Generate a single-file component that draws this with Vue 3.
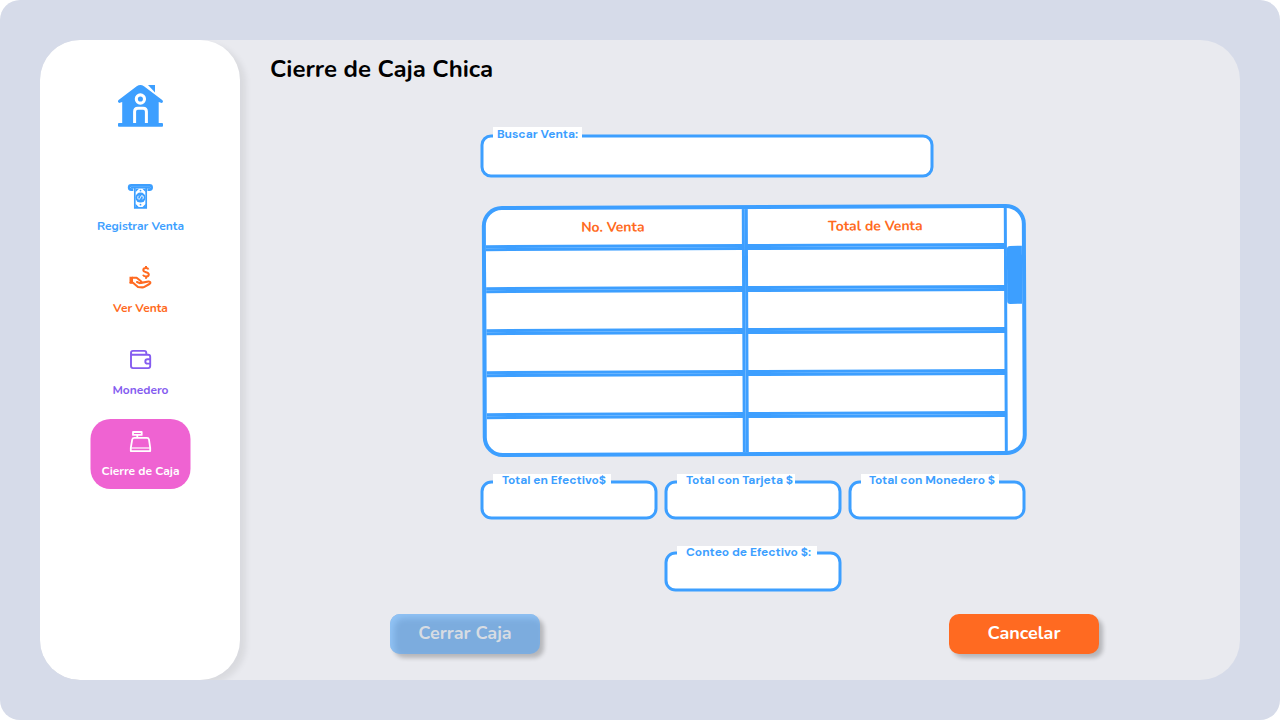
<script setup>
const nav = [
  { id: 'register', label: 'Registrar Venta' },
  { id: 'view', label: 'Ver Venta' },
  { id: 'wallet', label: 'Monedero' },
  { id: 'close', label: 'Cierre de Caja' },
]
const totals = [
  { id: 'cash', label: 'Total en Efectivo$' },
  { id: 'card', label: 'Total con Tarjeta $' },
  { id: 'purse', label: 'Total con Monedero $' },
]
const rows = [1, 2, 3, 4, 5]
</script>

<template>
  <div class="frame">
    <div class="panel">
      <aside class="sidebar">
        <svg class="home" width="45" height="42" viewBox="0 0 45 42">
          <path fill="#3d9fff" d="M18.7 1.2Q22.4-1.1 26 1.2L44.2 15q1.1 1.100.6 2.200l-1.100.9-3-1.200v21h3.400q.9 0 .9 1v1.800q0 1-.9 1H.9q-.9 0-.9-1v-1.800q0-1 .9-1h3.300v-21l-3 1.200L.1 17q-.4-1.300.5-2z" />
          <path fill="#3d9fff" d="M30 .1h7v7.500z" />
          <circle cx="22.400" cy="14" r="4.100" fill="#3d9fff" stroke="#fff" stroke-width="3.100" />
          <path d="M16.600 37.900V26.400q0-3.200 3.200-3.200h5.400q3.200 0 3.200 3.200v11.500" fill="none" stroke="#fff" stroke-width="3" />
        </svg>
        <nav>
          <div v-for="n in nav" :key="n.id" class="item" :class="n.id">
            <svg v-if="n.id === 'register'" width="28" height="28" viewBox="0 0 28 28">
              <path d="M6.800 6.600H4.700a2.100 2.100 0 0 1 0-4.200h18.400a2.100 2.100 0 0 1 0 4.200H21" fill="none" stroke="currentColor" stroke-width="2.600" />
              <path d="M5 4.500h18" stroke="currentColor" stroke-width="1.900" stroke-linecap="round" />
              <path d="M8.300 4.800v20h11.400v-20" fill="none" stroke="currentColor" stroke-width="1.700" />
              <circle cx="14" cy="14.600" r="5" fill="currentColor" />
              <path d="M9 5.800h3.500L9 9.300zM19.300 5.800h-3.500l3.500 3.500zM9 24.300h3.500L9 20.800zM19.300 24.300h-3.500l3.500-3.500z" fill="currentColor" />
              <circle cx="14" cy="7.600" r=".9" fill="currentColor" /><circle cx="14" cy="21.700" r=".9" fill="currentColor" />
              <path d="M12.300 12.700c-1.700 1-1.100 3.800.4 3.500 1.700-.4 1-3.400 2.700-3.600 1.500-.1 2 2.700.5 3.700" fill="none" stroke="#fff" stroke-width="1" />
            </svg>
            <svg v-else-if="n.id === 'view'" width="28" height="28" viewBox="0 0 28 28">
              <path d="M22 5.500c-.4-1-1.300-1.400-2.500-1.400-1.700 0-2.700.8-2.700 2 0 3 5.500 1.300 5.500 4.400 0 1.300-1.100 2.100-2.800 2.100-1.500 0-2.600-.6-3-1.800M19.500 2.100v2M19.500 12.600v2.100" fill="none" stroke="currentColor" stroke-width="2" />
              <path d="M3 12.800h3.500v6.400H3z" fill="currentColor" />
              <path d="M6 13.700h4.100l4.100 3.300c1.200 1.100.5 2.200-1 2.100L10.500 18M14.600 18.900l7.400-1.400c2-.2 2.600 1.500.9 2.500l-5 2.900q-1 .6-2.200.5l-4.200-.4-5-4.200H4" fill="none" stroke="currentColor" stroke-width="2.100" stroke-linejoin="round" stroke-linecap="round" />
            </svg>
            <svg v-else-if="n.id === 'wallet'" width="28" height="28" viewBox="0 0 28 28">
              <g fill="none" stroke="currentColor" stroke-width="1.900" transform="translate(-.4 0)">
                <path d="M4.900 8.300V6.900q0-2 2-2h11.200q2.100 0 2.100 2.100v1.400M4.900 7.500v12.600q0 2 2 2h15.200q2 0 2-2V10.700q0-2-2-2H6.300q-1.400 0-1.400-1.400" />
                <path d="M24 13.200h-2.600a2.200 2.200 0 0 0 0 4.400H24" />
              </g>
            </svg>
            <svg v-else width="28" height="28" viewBox="0 0 28 28">
              <g fill="none" stroke="currentColor" stroke-width="1.800" stroke-linejoin="round" transform="translate(-.5 0)">
                <path d="M7 4h8.700v2.900H7zM11.300 7v3M8.900 9.900h12.100q1.700 0 2 1.700l1.200 8.300v3.200H4.800v-3.200l1.400-8.300q.4-1.700 2-1.700z" />
                <path d="M5.200 19.900h19" stroke-width="1.500" opacity=".8" />
              </g>
            </svg>
            <span>{{ n.label }}</span>
          </div>
        </nav>
      </aside>

      <main>
        <h1><span>Cierre de Caja Chica</span></h1>

        <div class="form">
          <div class="field search">
            <svg width="454" height="44"><rect x="2" y="2" width="450" height="40" rx="9" /></svg>
            <label><span>Buscar Venta:</span></label>
          </div>

          <div class="table">
            <div class="grid">
              <div class="cell head no"><span>No. Venta</span></div>
              <div class="cell head total"><span>Total de Venta</span></div>
              <template v-for="r in rows" :key="r">
                <div class="cell"></div>
                <div class="cell"></div>
              </template>
            </div>
            <div class="track"><div class="thumb"></div></div>
          </div>

          <div class="totals">
            <div v-for="t in totals" :key="t.id" class="field" :class="t.id">
              <svg width="178" height="40"><rect x="2" y="2" width="174" height="36" rx="9.500" /></svg>
              <label><span>{{ t.label }}</span></label>
            </div>
          </div>

          <div class="field count">
            <svg width="178" height="41"><rect x="2" y="2" width="174" height="37" rx="9.500" /></svg>
            <label><span>Conteo de Efectivo $:</span></label>
          </div>
        </div>

        <div class="actions">
          <button class="confirm" disabled><span>Cerrar Caja</span></button>
          <button class="cancel"><span>Cancelar</span></button>
        </div>
      </main>
    </div>
  </div>
</template>

<style>
body { margin: 0; background: #fff; }
</style>

<style scoped>
.frame, .frame * { box-sizing: border-box; }
.frame {
  width: 1280px; height: 720px; padding: 40px;
  background: #d6dbe9; border-radius: 20px; overflow: hidden;
  font-family: Nunito, Lato, "Open Sans", sans-serif; font-weight: 700;
}
span { white-space: nowrap; }
.panel { display: flex; height: 640px; border-radius: 40px; background: #e9eaef; overflow: hidden; }
.sidebar {
  width: 200px; flex: none; background: #fff; border-radius: 40px;
  box-shadow: 6px 4px 6px rgba(0, 0, 0, .07);
  display: flex; flex-direction: column; align-items: center; padding-top: 45px;
}
.home { display: block; }
nav {
  display: flex; flex-direction: column; gap: 12px; margin: 46.500px 0 0 1px;
  transform: translateX(-.5px);
}
.item {
  width: 100px; height: 69.800px; padding-top: 9px; border-radius: 20px;
  display: flex; flex-direction: column; align-items: center;
  font-size: 12px; line-height: 16px;
}
.item svg { display: block; flex: none; }
.item span { margin-top: 7px; padding-left: 1px; }
.register { color: #3d9fff; }
.view { color: #ff6a21; }
.wallet { color: #855cf0; }
.view span, .wallet span { margin-top: 7.600px; }
.close { color: #fff; background: #ef63d2; }

main { flex: 1; padding: 13px 0 0 30px; }
h1 { margin: 0; font-size: 24px; line-height: 32px; height: 32px; font-weight: 700; color: #000; }
.form { width: 546px; margin: 49px 0 0 210px; }
.field { position: relative; }
.field svg { display: block; }
.field rect { fill: #fff; stroke: #3d9fff; stroke-width: 3; }
.field label {
  position: absolute; left: 13px; top: -6px; height: 14px;
  display: flex; align-items: center; justify-content: center;
  background: #fff; color: #3d9fff;
  font: 700 12px/14px "DM Sans", Inter, sans-serif;
}
.search label { width: 89px; top: -7px; }
.totals label, .count label { padding-bottom: 2px; }
.cash label { width: 118px; padding-left: 4px; }
.card label { width: 118px; padding-left: 7px; }
.purse label { width: 138px; padding-left: 4px; }
.count label { width: 140px; padding-left: 3px; top: -5px; }

.table {
  position: relative; display: flex; width: 544px; height: 251px; margin: 27px 0 0 2px;
  border: 4px solid #3d9fff; border-radius: 20px; background: #fff; overflow: hidden;
  transform: translate(.3px, 0) rotate(-.25deg);
}
.grid {
  flex: none; display: grid; grid-template-columns: 262px 262px; grid-auto-rows: 42px;
  margin: -4px 0 0 -3px;
}
.cell { border: 3px solid #3d9fff; }
.head { display: flex; align-items: center; justify-content: center; color: #ff6a21; font-size: 14px; }
.no { padding-right: 2px; }
.total { padding-right: 1px; }
.track { flex: 1; padding-top: 38px; }
.thumb { height: 58px; background: #3d9fff; border-radius: 3px 0 0 3px; }
.totals { display: flex; gap: 6px; margin-top: 24px; }
.count { width: 178px; margin: 31px 0 0 184px; }
.actions { display: flex; justify-content: space-between; width: 709px; margin: 22px 0 0 120px; }
button {
  width: 150px; height: 40px; padding: 0 0 2px; border: 0; border-radius: 10px;
  font: 700 18px/24px Nunito, Lato, sans-serif; color: #fff;
  box-shadow: 4px 4px 4px rgba(0, 0, 0, .22);
}
.cancel { background: #ff6a21; }
.confirm {
  background: #7cacde; color: #d7dce3;
  box-shadow: 4px 4px 4px rgba(0, 0, 0, .22), inset 4px 4px 6px #91c3f5;
}
</style>
